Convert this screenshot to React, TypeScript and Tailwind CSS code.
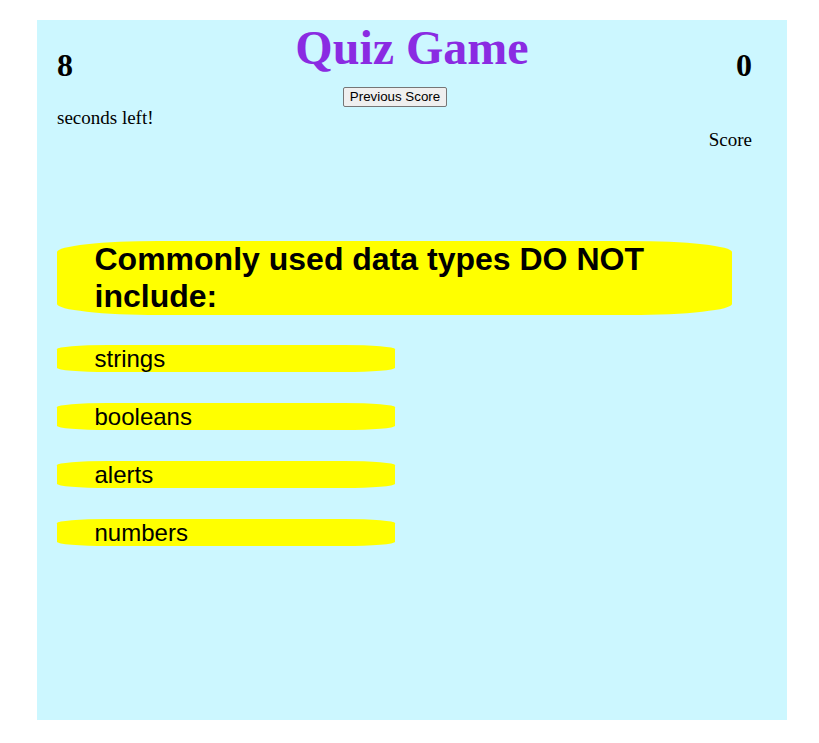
import React from "react";

const serif = { fontFamily: '"Liberation Serif", "Times New Roman", serif' };

export default function App() {
  const answers = ["strings", "booleans", "alerts", "numbers"];
  return (
    <div className="w-[819px] h-[743px] bg-white pt-[20px] pl-[37px]">
      <div className="w-[750px] h-[700px] bg-[#ccf7ff] text-black flex flex-col" style={serif}>
        <div className="grid grid-cols-[1fr_auto_1fr]">
          <div className="pl-[20px] flex flex-col items-start">
            <div className="mt-[26.7px] text-[32px] leading-[37px] font-bold">8</div>
            <div className="mt-[22.9px] text-[19px] leading-[22px]">seconds left!</div>
          </div>
          <div className="flex flex-col items-center">
            <div className="text-[48px] leading-[55px] font-bold text-[#8a2be2]">Quiz Game</div>
            <div className="mt-[12px] flex justify-center mr-[34px]">
              <button
                className="h-[20px] px-[6px] bg-[#efefef] border border-[#767676] rounded-[2px] text-[13.33px] leading-[16px] text-black"
                style={{ fontFamily: '"Liberation Sans", Arial, sans-serif' }}
              >
                Previous Score
              </button>
            </div>
          </div>
          <div className="pr-[35px] flex flex-col items-end">
            <div className="mt-[26.7px] text-[32px] leading-[37px] font-bold">0</div>
            <div className="mt-[45.2px] text-[19px] leading-[22px]">Score</div>
          </div>
        </div>
        <div
          className="ml-[20px] mt-[90px] flex flex-col"
          style={{ fontFamily: '"Liberation Sans", Arial, sans-serif' }}
        >
          <div className="w-[675px] bg-[#ffff00] rounded-[15%] pl-[37.5px] text-[32px] leading-[37px] font-bold">
            Commonly used data types DO NOT include:
          </div>
          <div className="mt-[30px] flex flex-col gap-[30.4px]">
            {answers.map((a) => (
              <div
                key={a}
                className="w-[337.5px] bg-[#ffff00] rounded-[15%] pl-[37.5px] text-[24px] leading-[27.6px]"
              >
                {a}
              </div>
            ))}
          </div>
        </div>
      </div>
    </div>
  );
}
